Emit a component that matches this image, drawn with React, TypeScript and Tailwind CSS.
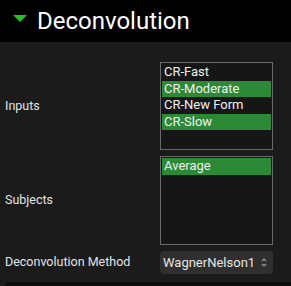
import React from 'react'

const inputs = [
  { name: 'CR-Fast', selected: false },
  { name: 'CR-Moderate', selected: true },
  { name: 'CR-New Form', selected: false },
  { name: 'CR-Slow', selected: true },
]

const subjects = [{ name: 'Average', selected: true }]

function ListBox({ items, height }: { items: { name: string; selected: boolean }[]; height: string }) {
  return (
    <div className={`${height} w-[113px] border border-[#6a6a6a] bg-[#161616] p-[1px]`}>
      {items.map(item => (
        <div
          key={item.name}
          className={`h-[16.5px] px-[2px] text-[13px] leading-[16.5px] text-[#f0f0f0] ${item.selected ? 'bg-[#2c8a37]' : ''}`}
        >
          {item.name}
        </div>
      ))}
    </div>
  )
}

export default function App() {
  return (
    <div className="flex h-[286px] w-[291px] flex-col overflow-hidden bg-[#1b1b1b] font-['Roboto',sans-serif]">
      <div className="flex h-[42px] shrink-0 items-center bg-black pl-[13px]">
        <svg width="14" height="7" viewBox="0 0 14 7" className="mt-[-5px]">
          <polygon points="0,0 14,0 7,7" fill="#22c32a" />
        </svg>
        <span className="ml-[10px] text-[24px] leading-none text-white">Deconvolution</span>
      </div>

      <div className="grid grid-cols-[155px_113px] items-center gap-y-[6px] pl-[5px] pt-[20px] text-[12.5px] text-[#e2e2e2]">
        <span>Inputs</span>
        <ListBox items={inputs} height="h-[88px]" />

        <span>Subjects</span>
        <ListBox items={subjects} height="h-[89px]" />

        <span>Deconvolution Method</span>
        <div className="flex h-[23px] items-center justify-between rounded-[4px] bg-[#2f2f2f] pl-[3px] pr-[6px] text-[13px] text-[#e6e6e6]">
          <span>WagnerNelson1</span>
          <svg width="6" height="11" viewBox="0 0 6 11" fill="none" stroke="#9a9a9a" strokeWidth="1.2">
            <path d="M1 4 L3 2 L5 4" />
            <path d="M1 7 L3 9 L5 7" />
          </svg>
        </div>
      </div>

      <div className="ml-[5px] mt-[8px] flex-1 rounded-tl-[8px] bg-[#0c0c0c]" />
    </div>
  )
}
